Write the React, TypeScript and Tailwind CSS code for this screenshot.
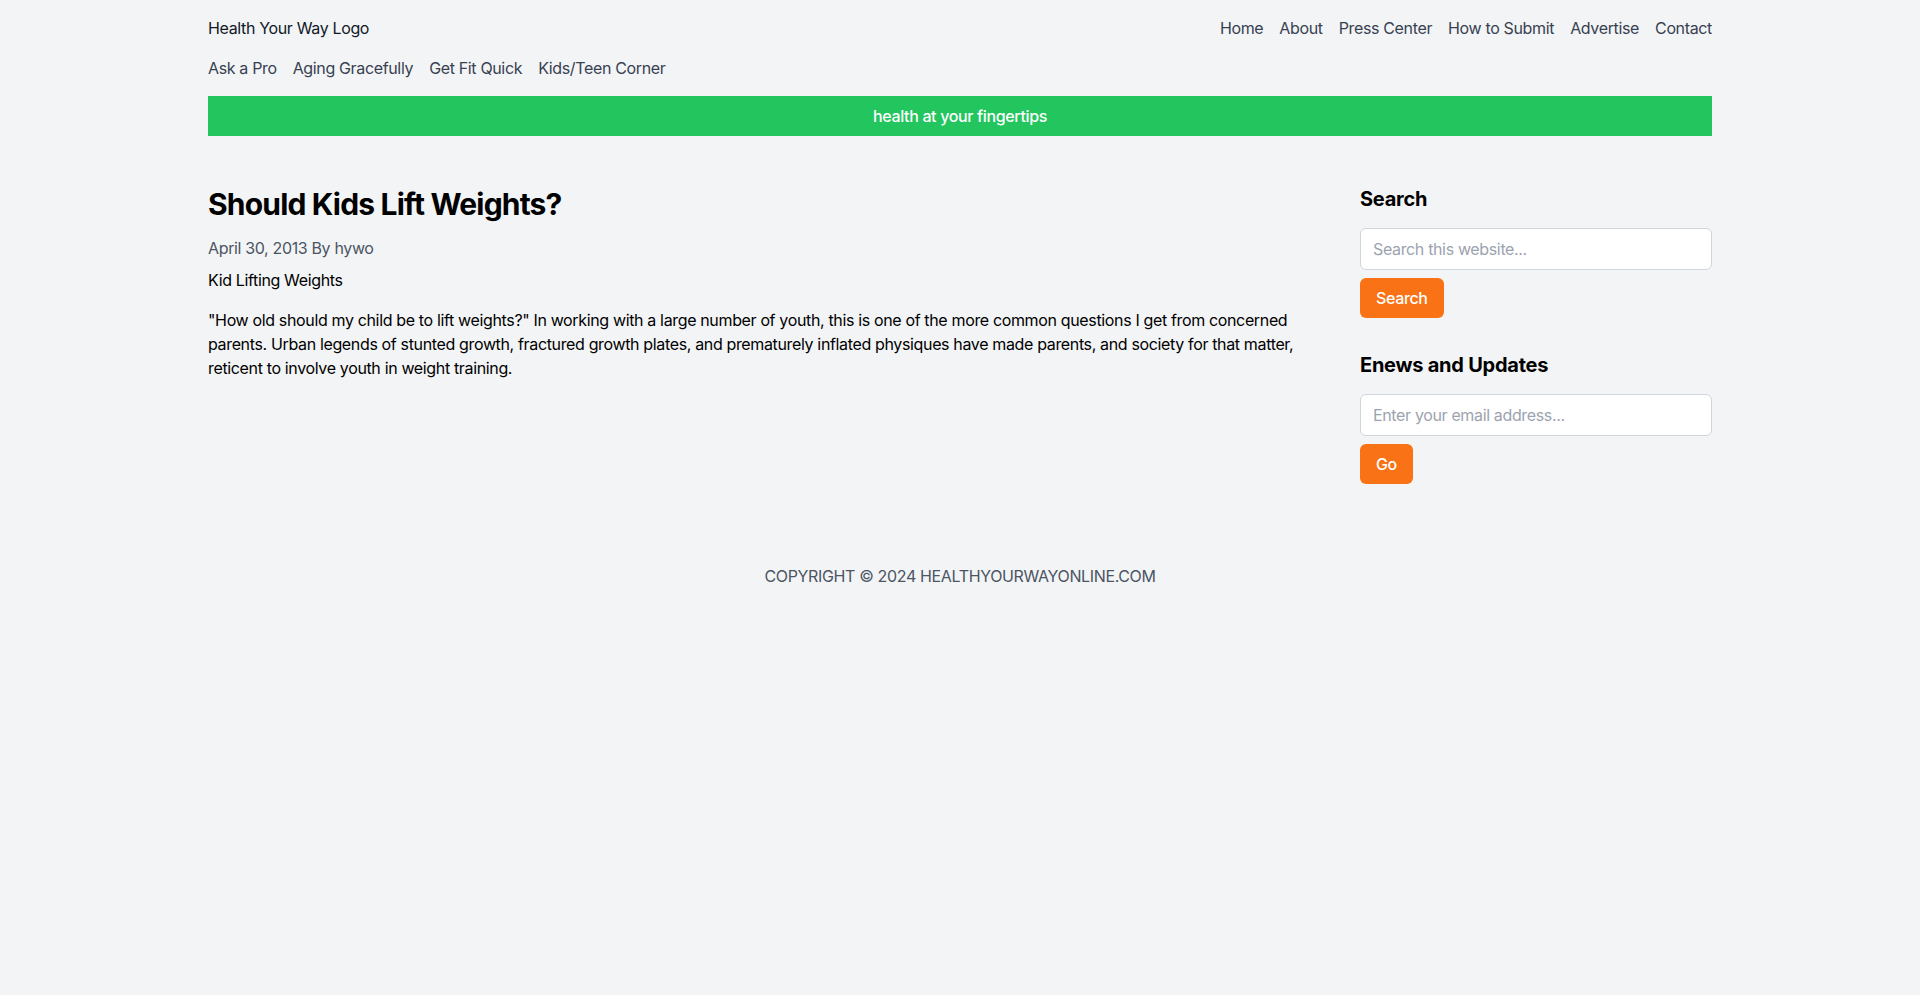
import React from "react";

export default function App() {
  const topNav = ["Home", "About", "Press Center", "How to Submit", "Advertise", "Contact"];
  const catNav = ["Ask a Pro", "Aging Gracefully", "Get Fit Quick", "Kids/Teen Corner"];
  return (
    <div
      className="min-h-screen bg-[#f3f4f6] text-black tracking-[-0.022em]"
      style={{ fontFamily: "Inter, 'Noto Sans', 'Liberation Sans', sans-serif" }}
    >
      <header className="container mx-auto px-4 py-4 flex flex-col gap-4">
        <div className="flex items-center justify-between">
          <a href="#" className="text-base leading-6 text-[#111827]">Health Your Way Logo</a>
          <nav className="flex gap-4">
            {topNav.map((n) => (
              <a key={n} href="#" className="text-base leading-6 text-[#374151]">{n}</a>
            ))}
          </nav>
        </div>
        <nav className="flex gap-4">
          {catNav.map((n) => (
            <a key={n} href="#" className="text-base leading-6 text-[#374151]">{n}</a>
          ))}
        </nav>
      </header>

      <div className="container mx-auto px-4">
        <div className="bg-[#22c55e] text-white text-center py-2 text-base leading-6 font-medium">
          health at your fingertips
        </div>
      </div>

      <main className="container mx-auto px-4 py-12 grid grid-cols-4 gap-8">
        <article className="col-span-3">
          <h1 className="text-3xl font-bold text-black pt-0.5 mb-3.5 tracking-[-0.027em]">Should Kids Lift Weights?</h1>
          <p className="text-base leading-6 text-[#4b5563] mb-2">April 30, 2013 By hywo</p>
          <p className="text-base leading-6 mb-4">Kid Lifting Weights</p>
          <p className="text-base leading-6">
            "How old should my child be to lift weights?" In working with a large number of youth, this is one of the more common questions I get from concerned parents. Urban legends of stunted growth, fractured growth plates, and prematurely inflated physiques have made parents, and society for that matter, reticent to involve youth in weight training.
          </p>
        </article>

        <aside className="col-span-1 flex flex-col gap-8">
          <section>
            <h2 className="text-xl font-bold pt-px mb-[15px] tracking-[-0.012em]">Search</h2>
            <input
              type="text"
              placeholder="Search this website..."
              className="w-full border border-[#d1d5db] rounded-md px-3 py-2 text-base leading-6 bg-white placeholder:text-[#9ca3af] outline-none"
            />
            <button className="mt-2 bg-[#f97316] text-white px-4 py-2 rounded-md text-base leading-6 font-medium">
              Search
            </button>
          </section>
          <section>
            <h2 className="text-xl font-bold pt-px mb-[15px] tracking-[-0.012em]">Enews and Updates</h2>
            <input
              type="email"
              placeholder="Enter your email address..."
              className="w-full border border-[#d1d5db] rounded-md px-3 py-2 text-base leading-6 bg-white placeholder:text-[#9ca3af] outline-none"
            />
            <button className="mt-2 bg-[#f97316] text-white px-4 py-2 rounded-md text-base leading-6 font-medium">
              Go
            </button>
          </section>
        </aside>
      </main>

      <footer className="container mx-auto px-4 py-8 text-center">
        <p className="text-base leading-6 text-[#4b5563]">COPYRIGHT © 2024 HEALTHYOURWAYONLINE.COM</p>
      </footer>
    </div>
  );
}
